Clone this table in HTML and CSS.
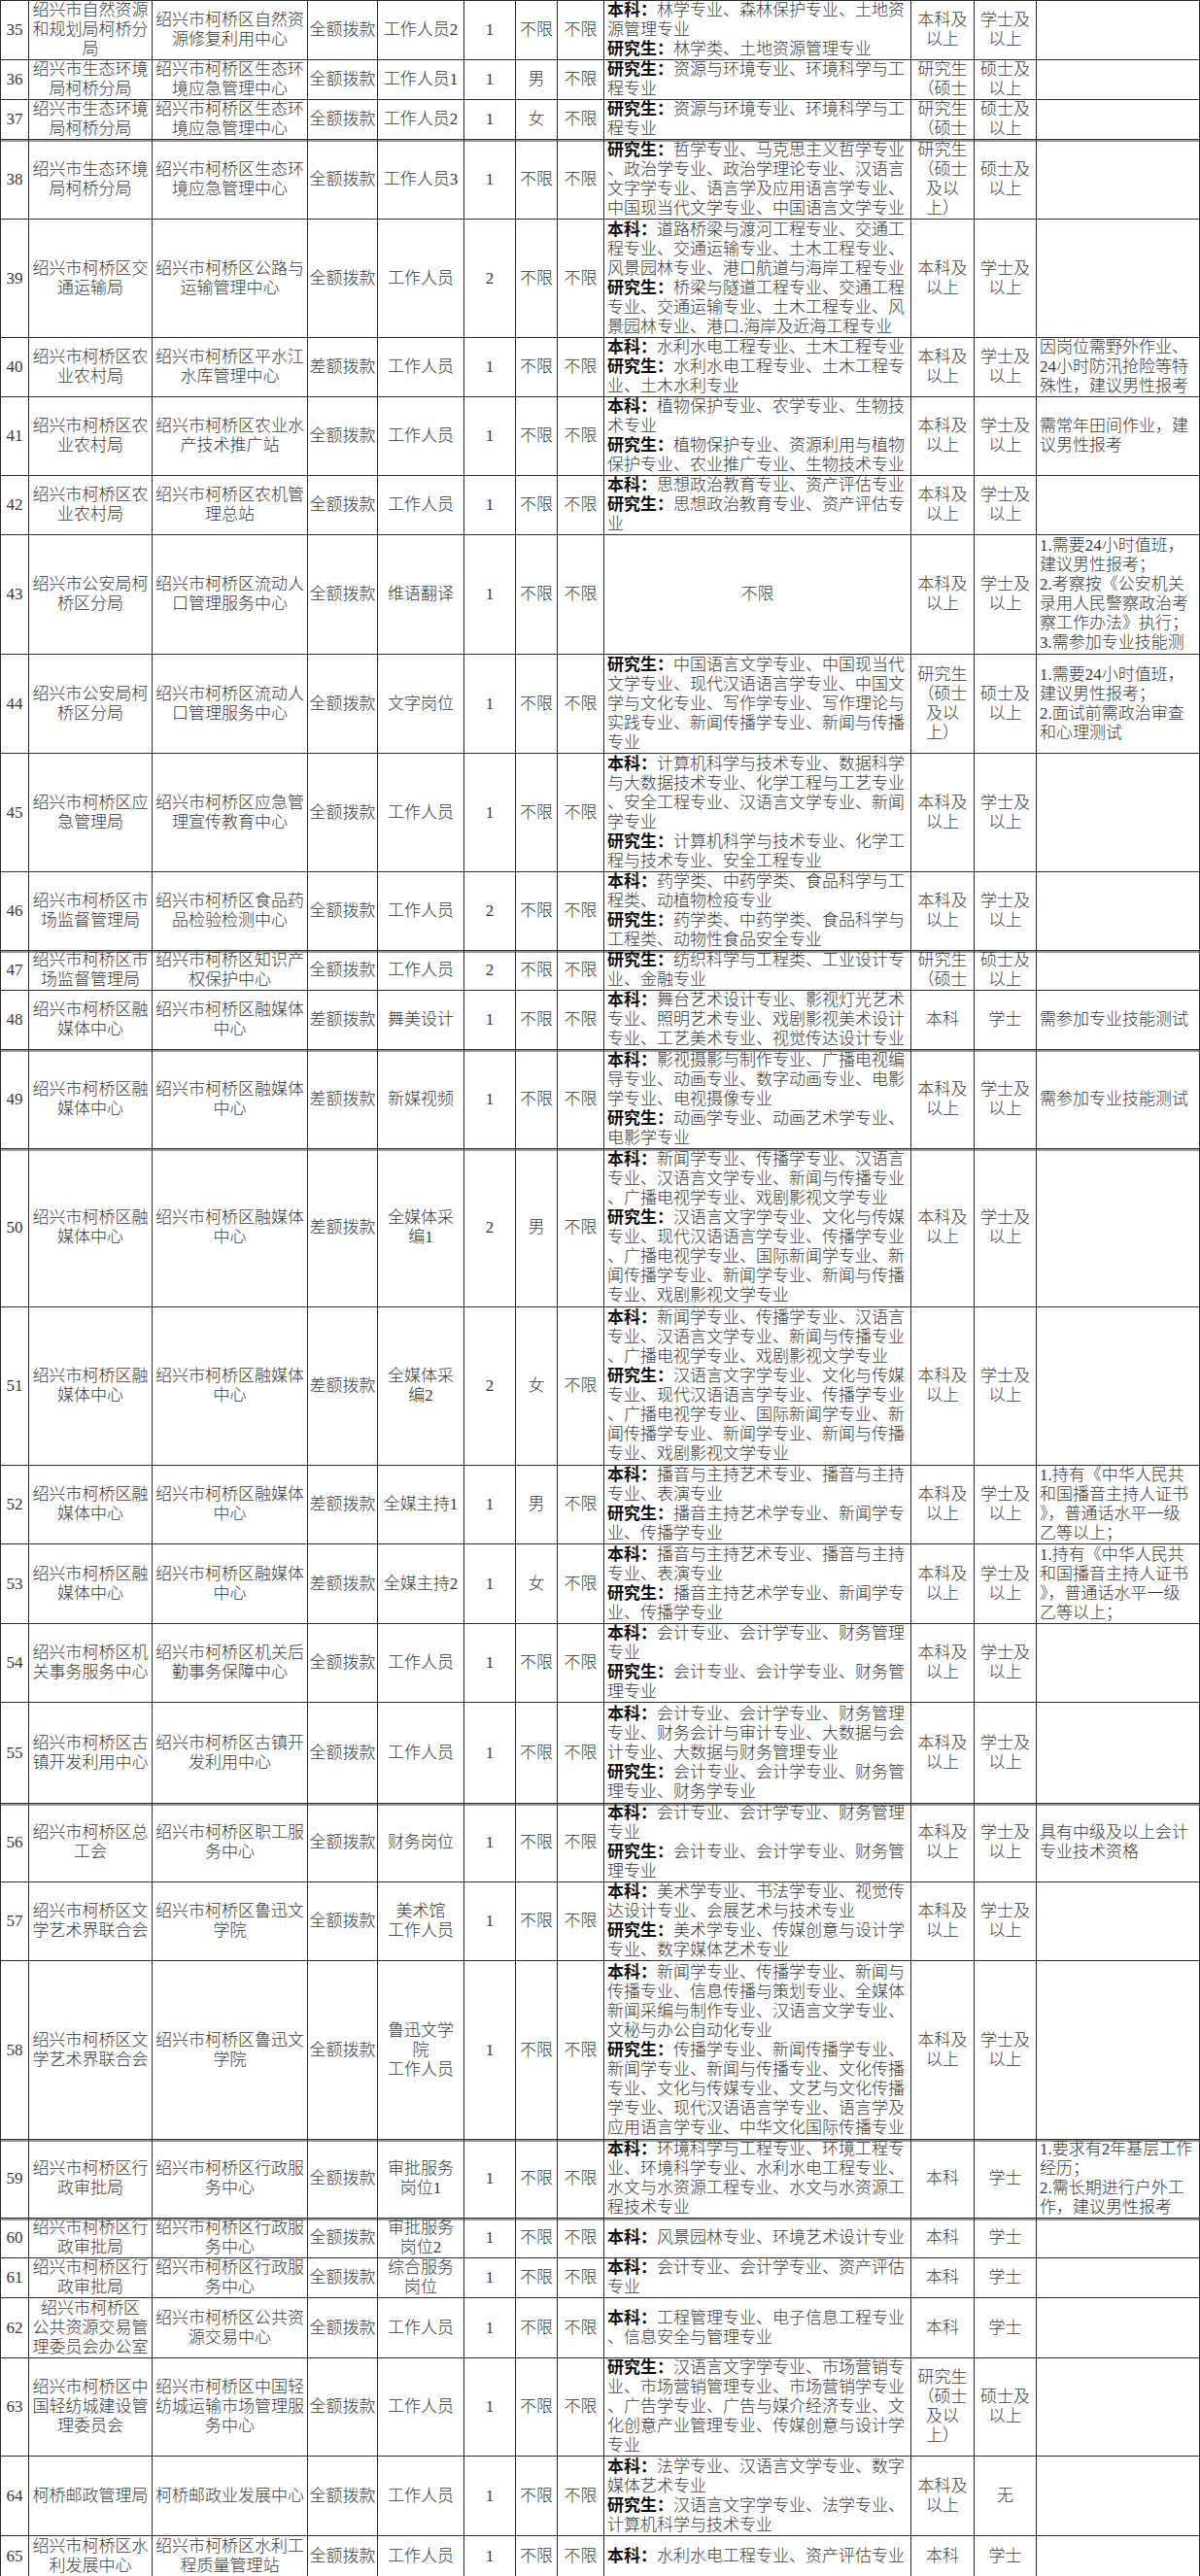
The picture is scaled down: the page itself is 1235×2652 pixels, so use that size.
FILE: index.html
```html
<!DOCTYPE html>
<html lang="zh-CN">
<head>
<meta charset="utf-8">
<title>岗位表</title>
<link rel="stylesheet" href="styles.css">
</head>
<body>
<table class="grid">
<colgroup>
<col class="w-no"><col class="w-dept"><col class="w-unit"><col class="w-fund"><col class="w-post"><col class="w-num"><col class="w-sex"><col class="w-age"><col class="w-major"><col class="w-edu"><col class="w-deg"><col class="w-note">
</colgroup>
<tbody>
<tr class="h61">
<td><div class="c"><p>35</p></div></td>
<td><div class="c"><p>绍兴市自然资源<br>和规划局柯桥分<br>局</p></div></td>
<td><div class="c"><p>绍兴市柯桥区自然资<br>源修复利用中心</p></div></td>
<td><div class="c"><p>全额拨款</p></div></td>
<td><div class="c"><p>工作人员2</p></div></td>
<td><div class="c"><p>1</p></div></td>
<td><div class="c"><p>不限</p></div></td>
<td><div class="c"><p>不限</p></div></td>
<td class="l"><div class="c"><p><b>本科：</b>林学专业、森林保护专业、土地资<br>源管理专业<br><b>研究生：</b>林学类、土地资源管理专业</p></div></td>
<td><div class="c"><p>本科及<br>以上</p></div></td>
<td><div class="c"><p>学士及<br>以上</p></div></td>
<td class="l"><div class="c"><p></p></div></td>
</tr>
<tr class="h41">
<td><div class="c"><p>36</p></div></td>
<td><div class="c"><p>绍兴市生态环境<br>局柯桥分局</p></div></td>
<td><div class="c"><p>绍兴市柯桥区生态环<br>境应急管理中心</p></div></td>
<td><div class="c"><p>全额拨款</p></div></td>
<td><div class="c"><p>工作人员1</p></div></td>
<td><div class="c"><p>1</p></div></td>
<td><div class="c"><p>男</p></div></td>
<td><div class="c"><p>不限</p></div></td>
<td class="l"><div class="c"><p><b>研究生：</b>资源与环境专业、环境科学与工<br>程专业</p></div></td>
<td><div class="c"><p>研究生<br>（硕士</p></div></td>
<td><div class="c"><p>硕士及<br>以上</p></div></td>
<td class="l"><div class="c"><p></p></div></td>
</tr>
<tr class="h41">
<td><div class="c"><p>37</p></div></td>
<td><div class="c"><p>绍兴市生态环境<br>局柯桥分局</p></div></td>
<td><div class="c"><p>绍兴市柯桥区生态环<br>境应急管理中心</p></div></td>
<td><div class="c"><p>全额拨款</p></div></td>
<td><div class="c"><p>工作人员2</p></div></td>
<td><div class="c"><p>1</p></div></td>
<td><div class="c"><p>女</p></div></td>
<td><div class="c"><p>不限</p></div></td>
<td class="l"><div class="c"><p><b>研究生：</b>资源与环境专业、环境科学与工<br>程专业</p></div></td>
<td><div class="c"><p>研究生<br>（硕士</p></div></td>
<td><div class="c"><p>硕士及<br>以上</p></div></td>
<td class="l"><div class="c"><p></p></div></td>
</tr>
<tr class="h82 tk">
<td><div class="c"><p>38</p></div></td>
<td><div class="c"><p>绍兴市生态环境<br>局柯桥分局</p></div></td>
<td><div class="c"><p>绍兴市柯桥区生态环<br>境应急管理中心</p></div></td>
<td><div class="c"><p>全额拨款</p></div></td>
<td><div class="c"><p>工作人员3</p></div></td>
<td><div class="c"><p>1</p></div></td>
<td><div class="c"><p>不限</p></div></td>
<td><div class="c"><p>不限</p></div></td>
<td class="l"><div class="c"><p><b>研究生：</b>哲学专业、马克思主义哲学专业<br>、政治学专业、政治学理论专业、汉语言<br>文字学专业、语言学及应用语言学专业、<br>中国现当代文学专业、中国语言文学专业</p></div></td>
<td><div class="c"><p>研究生<br>（硕士<br>及以<br>上）</p></div></td>
<td><div class="c"><p>硕士及<br>以上</p></div></td>
<td class="l"><div class="c"><p></p></div></td>
</tr>
<tr class="h122">
<td><div class="c"><p>39</p></div></td>
<td><div class="c"><p>绍兴市柯桥区交<br>通运输局</p></div></td>
<td><div class="c"><p>绍兴市柯桥区公路与<br>运输管理中心</p></div></td>
<td><div class="c"><p>全额拨款</p></div></td>
<td><div class="c"><p>工作人员</p></div></td>
<td><div class="c"><p>2</p></div></td>
<td><div class="c"><p>不限</p></div></td>
<td><div class="c"><p>不限</p></div></td>
<td class="l"><div class="c"><p><b>本科：</b>道路桥梁与渡河工程专业、交通工<br>程专业、交通运输专业、土木工程专业、<br>风景园林专业、港口航道与海岸工程专业<br><b>研究生：</b>桥梁与隧道工程专业、交通工程<br>专业、交通运输专业、土木工程专业、风<br>景园林专业、港口.海岸及近海工程专业</p></div></td>
<td><div class="c"><p>本科及<br>以上</p></div></td>
<td><div class="c"><p>学士及<br>以上</p></div></td>
<td class="l"><div class="c"><p></p></div></td>
</tr>
<tr class="h61">
<td><div class="c"><p>40</p></div></td>
<td><div class="c"><p>绍兴市柯桥区农<br>业农村局</p></div></td>
<td><div class="c"><p>绍兴市柯桥区平水江<br>水库管理中心</p></div></td>
<td><div class="c"><p>差额拨款</p></div></td>
<td><div class="c"><p>工作人员</p></div></td>
<td><div class="c"><p>1</p></div></td>
<td><div class="c"><p>不限</p></div></td>
<td><div class="c"><p>不限</p></div></td>
<td class="l"><div class="c"><p><b>本科：</b>水利水电工程专业、土木工程专业<br><b>研究生：</b>水利水电工程专业、土木工程专<br>业、土木水利专业</p></div></td>
<td><div class="c"><p>本科及<br>以上</p></div></td>
<td><div class="c"><p>学士及<br>以上</p></div></td>
<td class="l"><div class="c"><p>因岗位需野外作业、<br>24小时防汛抢险等特<br>殊性，建议男性报考</p></div></td>
</tr>
<tr class="h81">
<td><div class="c"><p>41</p></div></td>
<td><div class="c"><p>绍兴市柯桥区农<br>业农村局</p></div></td>
<td><div class="c"><p>绍兴市柯桥区农业水<br>产技术推广站</p></div></td>
<td><div class="c"><p>全额拨款</p></div></td>
<td><div class="c"><p>工作人员</p></div></td>
<td><div class="c"><p>1</p></div></td>
<td><div class="c"><p>不限</p></div></td>
<td><div class="c"><p>不限</p></div></td>
<td class="l"><div class="c"><p><b>本科：</b>植物保护专业、农学专业、生物技<br>术专业<br><b>研究生：</b>植物保护专业、资源利用与植物<br>保护专业、农业推广专业、生物技术专业</p></div></td>
<td><div class="c"><p>本科及<br>以上</p></div></td>
<td><div class="c"><p>学士及<br>以上</p></div></td>
<td class="l"><div class="c"><p>需常年田间作业，建<br>议男性报考</p></div></td>
</tr>
<tr class="h61">
<td><div class="c"><p>42</p></div></td>
<td><div class="c"><p>绍兴市柯桥区农<br>业农村局</p></div></td>
<td><div class="c"><p>绍兴市柯桥区农机管<br>理总站</p></div></td>
<td><div class="c"><p>全额拨款</p></div></td>
<td><div class="c"><p>工作人员</p></div></td>
<td><div class="c"><p>1</p></div></td>
<td><div class="c"><p>不限</p></div></td>
<td><div class="c"><p>不限</p></div></td>
<td class="l"><div class="c"><p><b>本科：</b>思想政治教育专业、资产评估专业<br><b>研究生：</b>思想政治教育专业、资产评估专<br>业</p></div></td>
<td><div class="c"><p>本科及<br>以上</p></div></td>
<td><div class="c"><p>学士及<br>以上</p></div></td>
<td class="l"><div class="c"><p></p></div></td>
</tr>
<tr class="h123">
<td><div class="c"><p>43</p></div></td>
<td><div class="c"><p>绍兴市公安局柯<br>桥区分局</p></div></td>
<td><div class="c"><p>绍兴市柯桥区流动人<br>口管理服务中心</p></div></td>
<td><div class="c"><p>全额拨款</p></div></td>
<td><div class="c"><p>维语翻译</p></div></td>
<td><div class="c"><p>1</p></div></td>
<td><div class="c"><p>不限</p></div></td>
<td><div class="c"><p>不限</p></div></td>
<td><div class="c"><p>不限</p></div></td>
<td><div class="c"><p>本科及<br>以上</p></div></td>
<td><div class="c"><p>学士及<br>以上</p></div></td>
<td class="l"><div class="c"><p>1.需要24小时值班，<br>建议男性报考；<br>2.考察按《公安机关<br>录用人民警察政治考<br>察工作办法》执行；<br>3.需参加专业技能测</p></div></td>
</tr>
<tr class="h102">
<td><div class="c"><p>44</p></div></td>
<td><div class="c"><p>绍兴市公安局柯<br>桥区分局</p></div></td>
<td><div class="c"><p>绍兴市柯桥区流动人<br>口管理服务中心</p></div></td>
<td><div class="c"><p>全额拨款</p></div></td>
<td><div class="c"><p>文字岗位</p></div></td>
<td><div class="c"><p>1</p></div></td>
<td><div class="c"><p>不限</p></div></td>
<td><div class="c"><p>不限</p></div></td>
<td class="l"><div class="c"><p><b>研究生：</b>中国语言文学专业、中国现当代<br>文学专业、现代汉语语言学专业、中国文<br>学与文化专业、写作学专业、写作理论与<br>实践专业、新闻传播学专业、新闻与传播<br>专业</p></div></td>
<td><div class="c"><p>研究生<br>（硕士<br>及以<br>上）</p></div></td>
<td><div class="c"><p>硕士及<br>以上</p></div></td>
<td class="l"><div class="c"><p>1.需要24小时值班，<br>建议男性报考；<br>2.面试前需政治审查<br>和心理测试</p></div></td>
</tr>
<tr class="h122">
<td><div class="c"><p>45</p></div></td>
<td><div class="c"><p>绍兴市柯桥区应<br>急管理局</p></div></td>
<td><div class="c"><p>绍兴市柯桥区应急管<br>理宣传教育中心</p></div></td>
<td><div class="c"><p>全额拨款</p></div></td>
<td><div class="c"><p>工作人员</p></div></td>
<td><div class="c"><p>1</p></div></td>
<td><div class="c"><p>不限</p></div></td>
<td><div class="c"><p>不限</p></div></td>
<td class="l"><div class="c"><p><b>本科：</b>计算机科学与技术专业、数据科学<br>与大数据技术专业、化学工程与工艺专业<br>、安全工程专业、汉语言文学专业、新闻<br>学专业<br><b>研究生：</b>计算机科学与技术专业、化学工<br>程与技术专业、安全工程专业</p></div></td>
<td><div class="c"><p>本科及<br>以上</p></div></td>
<td><div class="c"><p>学士及<br>以上</p></div></td>
<td class="l"><div class="c"><p></p></div></td>
</tr>
<tr class="h81">
<td><div class="c"><p>46</p></div></td>
<td><div class="c"><p>绍兴市柯桥区市<br>场监督管理局</p></div></td>
<td><div class="c"><p>绍兴市柯桥区食品药<br>品检验检测中心</p></div></td>
<td><div class="c"><p>全额拨款</p></div></td>
<td><div class="c"><p>工作人员</p></div></td>
<td><div class="c"><p>2</p></div></td>
<td><div class="c"><p>不限</p></div></td>
<td><div class="c"><p>不限</p></div></td>
<td class="l"><div class="c"><p><b>本科：</b>药学类、中药学类、食品科学与工<br>程类、动植物检疫专业<br><b>研究生：</b>药学类、中药学类、食品科学与<br>工程类、动物性食品安全专业</p></div></td>
<td><div class="c"><p>本科及<br>以上</p></div></td>
<td><div class="c"><p>学士及<br>以上</p></div></td>
<td class="l"><div class="c"><p></p></div></td>
</tr>
<tr class="h41 tk">
<td><div class="c"><p>47</p></div></td>
<td><div class="c"><p>绍兴市柯桥区市<br>场监督管理局</p></div></td>
<td><div class="c"><p>绍兴市柯桥区知识产<br>权保护中心</p></div></td>
<td><div class="c"><p>全额拨款</p></div></td>
<td><div class="c"><p>工作人员</p></div></td>
<td><div class="c"><p>2</p></div></td>
<td><div class="c"><p>不限</p></div></td>
<td><div class="c"><p>不限</p></div></td>
<td class="l"><div class="c"><p><b>研究生：</b>纺织科学与工程类、工业设计专<br>业、金融专业</p></div></td>
<td><div class="c"><p>研究生<br>（硕士</p></div></td>
<td><div class="c"><p>硕士及<br>以上</p></div></td>
<td class="l"><div class="c"><p></p></div></td>
</tr>
<tr class="h61">
<td><div class="c"><p>48</p></div></td>
<td><div class="c"><p>绍兴市柯桥区融<br>媒体中心</p></div></td>
<td><div class="c"><p>绍兴市柯桥区融媒体<br>中心</p></div></td>
<td><div class="c"><p>差额拨款</p></div></td>
<td><div class="c"><p>舞美设计</p></div></td>
<td><div class="c"><p>1</p></div></td>
<td><div class="c"><p>不限</p></div></td>
<td><div class="c"><p>不限</p></div></td>
<td class="l"><div class="c"><p><b>本科：</b>舞台艺术设计专业、影视灯光艺术<br>专业、照明艺术专业、戏剧影视美术设计<br>专业、工艺美术专业、视觉传达设计专业</p></div></td>
<td><div class="c"><p>本科</p></div></td>
<td><div class="c"><p>学士</p></div></td>
<td class="l"><div class="c"><p>需参加专业技能测试</p></div></td>
</tr>
<tr class="h102 tk">
<td><div class="c"><p>49</p></div></td>
<td><div class="c"><p>绍兴市柯桥区融<br>媒体中心</p></div></td>
<td><div class="c"><p>绍兴市柯桥区融媒体<br>中心</p></div></td>
<td><div class="c"><p>差额拨款</p></div></td>
<td><div class="c"><p>新媒视频</p></div></td>
<td><div class="c"><p>1</p></div></td>
<td><div class="c"><p>不限</p></div></td>
<td><div class="c"><p>不限</p></div></td>
<td class="l"><div class="c"><p><b>本科：</b>影视摄影与制作专业、广播电视编<br>导专业、动画专业、数字动画专业、电影<br>学专业、电视摄像专业<br><b>研究生：</b>动画学专业、动画艺术学专业、<br>电影学专业</p></div></td>
<td><div class="c"><p>本科及<br>以上</p></div></td>
<td><div class="c"><p>学士及<br>以上</p></div></td>
<td class="l"><div class="c"><p>需参加专业技能测试</p></div></td>
</tr>
<tr class="h163 tk">
<td><div class="c"><p>50</p></div></td>
<td><div class="c"><p>绍兴市柯桥区融<br>媒体中心</p></div></td>
<td><div class="c"><p>绍兴市柯桥区融媒体<br>中心</p></div></td>
<td><div class="c"><p>差额拨款</p></div></td>
<td><div class="c"><p>全媒体采<br>编1</p></div></td>
<td><div class="c"><p>2</p></div></td>
<td><div class="c"><p>男</p></div></td>
<td><div class="c"><p>不限</p></div></td>
<td class="l"><div class="c"><p><b>本科：</b>新闻学专业、传播学专业、汉语言<br>专业、汉语言文学专业、新闻与传播专业<br>、广播电视学专业、戏剧影视文学专业<br><b>研究生：</b>汉语言文字学专业、文化与传媒<br>专业、现代汉语语言学专业、传播学专业<br>、广播电视学专业、国际新闻学专业、新<br>闻传播学专业、新闻学专业、新闻与传播<br>专业、戏剧影视文学专业</p></div></td>
<td><div class="c"><p>本科及<br>以上</p></div></td>
<td><div class="c"><p>学士及<br>以上</p></div></td>
<td class="l"><div class="c"><p></p></div></td>
</tr>
<tr class="h163">
<td><div class="c"><p>51</p></div></td>
<td><div class="c"><p>绍兴市柯桥区融<br>媒体中心</p></div></td>
<td><div class="c"><p>绍兴市柯桥区融媒体<br>中心</p></div></td>
<td><div class="c"><p>差额拨款</p></div></td>
<td><div class="c"><p>全媒体采<br>编2</p></div></td>
<td><div class="c"><p>2</p></div></td>
<td><div class="c"><p>女</p></div></td>
<td><div class="c"><p>不限</p></div></td>
<td class="l"><div class="c"><p><b>本科：</b>新闻学专业、传播学专业、汉语言<br>专业、汉语言文学专业、新闻与传播专业<br>、广播电视学专业、戏剧影视文学专业<br><b>研究生：</b>汉语言文字学专业、文化与传媒<br>专业、现代汉语语言学专业、传播学专业<br>、广播电视学专业、国际新闻学专业、新<br>闻传播学专业、新闻学专业、新闻与传播<br>专业、戏剧影视文学专业</p></div></td>
<td><div class="c"><p>本科及<br>以上</p></div></td>
<td><div class="c"><p>学士及<br>以上</p></div></td>
<td class="l"><div class="c"><p></p></div></td>
</tr>
<tr class="h81">
<td><div class="c"><p>52</p></div></td>
<td><div class="c"><p>绍兴市柯桥区融<br>媒体中心</p></div></td>
<td><div class="c"><p>绍兴市柯桥区融媒体<br>中心</p></div></td>
<td><div class="c"><p>差额拨款</p></div></td>
<td><div class="c"><p>全媒主持1</p></div></td>
<td><div class="c"><p>1</p></div></td>
<td><div class="c"><p>男</p></div></td>
<td><div class="c"><p>不限</p></div></td>
<td class="l"><div class="c"><p><b>本科：</b>播音与主持艺术专业、播音与主持<br>专业、表演专业<br><b>研究生：</b>播音主持艺术学专业、新闻学专<br>业、传播学专业</p></div></td>
<td><div class="c"><p>本科及<br>以上</p></div></td>
<td><div class="c"><p>学士及<br>以上</p></div></td>
<td class="l"><div class="c"><p>1.持有《中华人民共<br>和国播音主持人证书<br>》，普通话水平一级<br>乙等以上；</p></div></td>
</tr>
<tr class="h82">
<td><div class="c"><p>53</p></div></td>
<td><div class="c"><p>绍兴市柯桥区融<br>媒体中心</p></div></td>
<td><div class="c"><p>绍兴市柯桥区融媒体<br>中心</p></div></td>
<td><div class="c"><p>差额拨款</p></div></td>
<td><div class="c"><p>全媒主持2</p></div></td>
<td><div class="c"><p>1</p></div></td>
<td><div class="c"><p>女</p></div></td>
<td><div class="c"><p>不限</p></div></td>
<td class="l"><div class="c"><p><b>本科：</b>播音与主持艺术专业、播音与主持<br>专业、表演专业<br><b>研究生：</b>播音主持艺术学专业、新闻学专<br>业、传播学专业</p></div></td>
<td><div class="c"><p>本科及<br>以上</p></div></td>
<td><div class="c"><p>学士及<br>以上</p></div></td>
<td class="l"><div class="c"><p>1.持有《中华人民共<br>和国播音主持人证书<br>》，普通话水平一级<br>乙等以上；</p></div></td>
</tr>
<tr class="h81">
<td><div class="c"><p>54</p></div></td>
<td><div class="c"><p>绍兴市柯桥区机<br>关事务服务中心</p></div></td>
<td><div class="c"><p>绍兴市柯桥区机关后<br>勤事务保障中心</p></div></td>
<td><div class="c"><p>全额拨款</p></div></td>
<td><div class="c"><p>工作人员</p></div></td>
<td><div class="c"><p>1</p></div></td>
<td><div class="c"><p>不限</p></div></td>
<td><div class="c"><p>不限</p></div></td>
<td class="l"><div class="c"><p><b>本科：</b>会计专业、会计学专业、财务管理<br>专业<br><b>研究生：</b>会计专业、会计学专业、财务管<br>理专业</p></div></td>
<td><div class="c"><p>本科及<br>以上</p></div></td>
<td><div class="c"><p>学士及<br>以上</p></div></td>
<td class="l"><div class="c"><p></p></div></td>
</tr>
<tr class="h104">
<td><div class="c"><p>55</p></div></td>
<td><div class="c"><p>绍兴市柯桥区古<br>镇开发利用中心</p></div></td>
<td><div class="c"><p>绍兴市柯桥区古镇开<br>发利用中心</p></div></td>
<td><div class="c"><p>全额拨款</p></div></td>
<td><div class="c"><p>工作人员</p></div></td>
<td><div class="c"><p>1</p></div></td>
<td><div class="c"><p>不限</p></div></td>
<td><div class="c"><p>不限</p></div></td>
<td class="l"><div class="c"><p><b>本科：</b>会计专业、会计学专业、财务管理<br>专业、财务会计与审计专业、大数据与会<br>计专业、大数据与财务管理专业<br><b>研究生：</b>会计专业、会计学专业、财务管<br>理专业、财务学专业</p></div></td>
<td><div class="c"><p>本科及<br>以上</p></div></td>
<td><div class="c"><p>学士及<br>以上</p></div></td>
<td class="l"><div class="c"><p></p></div></td>
</tr>
<tr class="h81 tk">
<td><div class="c"><p>56</p></div></td>
<td><div class="c"><p>绍兴市柯桥区总<br>工会</p></div></td>
<td><div class="c"><p>绍兴市柯桥区职工服<br>务中心</p></div></td>
<td><div class="c"><p>全额拨款</p></div></td>
<td><div class="c"><p>财务岗位</p></div></td>
<td><div class="c"><p>1</p></div></td>
<td><div class="c"><p>不限</p></div></td>
<td><div class="c"><p>不限</p></div></td>
<td class="l"><div class="c"><p><b>本科：</b>会计专业、会计学专业、财务管理<br>专业<br><b>研究生：</b>会计专业、会计学专业、财务管<br>理专业</p></div></td>
<td><div class="c"><p>本科及<br>以上</p></div></td>
<td><div class="c"><p>学士及<br>以上</p></div></td>
<td class="l"><div class="c"><p>具有中级及以上会计<br>专业技术资格</p></div></td>
</tr>
<tr class="h81">
<td><div class="c"><p>57</p></div></td>
<td><div class="c"><p>绍兴市柯桥区文<br>学艺术界联合会</p></div></td>
<td><div class="c"><p>绍兴市柯桥区鲁迅文<br>学院</p></div></td>
<td><div class="c"><p>全额拨款</p></div></td>
<td><div class="c"><p>美术馆<br>工作人员</p></div></td>
<td><div class="c"><p>1</p></div></td>
<td><div class="c"><p>不限</p></div></td>
<td><div class="c"><p>不限</p></div></td>
<td class="l"><div class="c"><p><b>本科：</b>美术学专业、书法学专业、视觉传<br>达设计专业、会展艺术与技术专业<br><b>研究生：</b>美术学专业、传媒创意与设计学<br>专业、数字媒体艺术专业</p></div></td>
<td><div class="c"><p>本科及<br>以上</p></div></td>
<td><div class="c"><p>学士及<br>以上</p></div></td>
<td class="l"><div class="c"><p></p></div></td>
</tr>
<tr class="h184">
<td><div class="c"><p>58</p></div></td>
<td><div class="c"><p>绍兴市柯桥区文<br>学艺术界联合会</p></div></td>
<td><div class="c"><p>绍兴市柯桥区鲁迅文<br>学院</p></div></td>
<td><div class="c"><p>全额拨款</p></div></td>
<td><div class="c"><p>鲁迅文学<br>院<br>工作人员</p></div></td>
<td><div class="c"><p>1</p></div></td>
<td><div class="c"><p>不限</p></div></td>
<td><div class="c"><p>不限</p></div></td>
<td class="l"><div class="c"><p><b>本科：</b>新闻学专业、传播学专业、新闻与<br>传播专业、信息传播与策划专业、全媒体<br>新闻采编与制作专业、汉语言文学专业、<br>文秘与办公自动化专业<br><b>研究生：</b>传播学专业、新闻传播学专业、<br>新闻学专业、新闻与传播专业、文化传播<br>专业、文化与传媒专业、文艺与文化传播<br>学专业、现代汉语语言学专业、语言学及<br>应用语言学专业、中华文化国际传播专业</p></div></td>
<td><div class="c"><p>本科及<br>以上</p></div></td>
<td><div class="c"><p>学士及<br>以上</p></div></td>
<td class="l"><div class="c"><p></p></div></td>
</tr>
<tr class="h81 tk">
<td><div class="c"><p>59</p></div></td>
<td><div class="c"><p>绍兴市柯桥区行<br>政审批局</p></div></td>
<td><div class="c"><p>绍兴市柯桥区行政服<br>务中心</p></div></td>
<td><div class="c"><p>全额拨款</p></div></td>
<td><div class="c"><p>审批服务<br>岗位1</p></div></td>
<td><div class="c"><p>1</p></div></td>
<td><div class="c"><p>不限</p></div></td>
<td><div class="c"><p>不限</p></div></td>
<td class="l"><div class="c"><p><b>本科：</b>环境科学与工程专业、环境工程专<br>业、环境科学专业、水利水电工程专业、<br>水文与水资源工程专业、水文与水资源工<br>程技术专业</p></div></td>
<td><div class="c"><p>本科</p></div></td>
<td><div class="c"><p>学士</p></div></td>
<td class="l"><div class="c"><p>1.要求有2年基层工作<br>经历；<br>2.需长期进行户外工<br>作，建议男性报考</p></div></td>
</tr>
<tr class="h41 tk">
<td><div class="c"><p>60</p></div></td>
<td><div class="c"><p>绍兴市柯桥区行<br>政审批局</p></div></td>
<td><div class="c"><p>绍兴市柯桥区行政服<br>务中心</p></div></td>
<td><div class="c"><p>全额拨款</p></div></td>
<td><div class="c"><p>审批服务<br>岗位2</p></div></td>
<td><div class="c"><p>1</p></div></td>
<td><div class="c"><p>不限</p></div></td>
<td><div class="c"><p>不限</p></div></td>
<td class="l"><div class="c"><p><b>本科：</b>风景园林专业、环境艺术设计专业</p></div></td>
<td><div class="c"><p>本科</p></div></td>
<td><div class="c"><p>学士</p></div></td>
<td class="l"><div class="c"><p></p></div></td>
</tr>
<tr class="h41">
<td><div class="c"><p>61</p></div></td>
<td><div class="c"><p>绍兴市柯桥区行<br>政审批局</p></div></td>
<td><div class="c"><p>绍兴市柯桥区行政服<br>务中心</p></div></td>
<td><div class="c"><p>全额拨款</p></div></td>
<td><div class="c"><p>综合服务<br>岗位</p></div></td>
<td><div class="c"><p>1</p></div></td>
<td><div class="c"><p>不限</p></div></td>
<td><div class="c"><p>不限</p></div></td>
<td class="l"><div class="c"><p><b>本科：</b>会计专业、会计学专业、资产评估<br>专业</p></div></td>
<td><div class="c"><p>本科</p></div></td>
<td><div class="c"><p>学士</p></div></td>
<td class="l"><div class="c"><p></p></div></td>
</tr>
<tr class="h62">
<td><div class="c"><p>62</p></div></td>
<td><div class="c"><p>绍兴市柯桥区<br>公共资源交易管<br>理委员会办公室</p></div></td>
<td><div class="c"><p>绍兴市柯桥区公共资<br>源交易中心</p></div></td>
<td><div class="c"><p>全额拨款</p></div></td>
<td><div class="c"><p>工作人员</p></div></td>
<td><div class="c"><p>1</p></div></td>
<td><div class="c"><p>不限</p></div></td>
<td><div class="c"><p>不限</p></div></td>
<td class="l"><div class="c"><p><b>本科：</b>工程管理专业、电子信息工程专业<br>、信息安全与管理专业</p></div></td>
<td><div class="c"><p>本科</p></div></td>
<td><div class="c"><p>学士</p></div></td>
<td class="l"><div class="c"><p></p></div></td>
</tr>
<tr class="h101">
<td><div class="c"><p>63</p></div></td>
<td><div class="c"><p>绍兴市柯桥区中<br>国轻纺城建设管<br>理委员会</p></div></td>
<td><div class="c"><p>绍兴市柯桥区中国轻<br>纺城运输市场管理服<br>务中心</p></div></td>
<td><div class="c"><p>全额拨款</p></div></td>
<td><div class="c"><p>工作人员</p></div></td>
<td><div class="c"><p>1</p></div></td>
<td><div class="c"><p>不限</p></div></td>
<td><div class="c"><p>不限</p></div></td>
<td class="l"><div class="c"><p><b>研究生：</b>汉语言文字学专业、市场营销专<br>业、市场营销管理专业、市场营销学专业<br>、广告学专业、广告与媒介经济专业、文<br>化创意产业管理专业、传媒创意与设计学<br>专业</p></div></td>
<td><div class="c"><p>研究生<br>（硕士<br>及以<br>上）</p></div></td>
<td><div class="c"><p>硕士及<br>以上</p></div></td>
<td class="l"><div class="c"><p></p></div></td>
</tr>
<tr class="h82">
<td><div class="c"><p>64</p></div></td>
<td><div class="c"><p>柯桥邮政管理局</p></div></td>
<td><div class="c"><p>柯桥邮政业发展中心</p></div></td>
<td><div class="c"><p>全额拨款</p></div></td>
<td><div class="c"><p>工作人员</p></div></td>
<td><div class="c"><p>1</p></div></td>
<td><div class="c"><p>不限</p></div></td>
<td><div class="c"><p>不限</p></div></td>
<td class="l"><div class="c"><p><b>本科：</b>法学专业、汉语言文学专业、数字<br>媒体艺术专业<br><b>研究生：</b>汉语言文字学专业、法学专业、<br>计算机科学与技术专业</p></div></td>
<td><div class="c"><p>本科及<br>以上</p></div></td>
<td><div class="c"><p>无</p></div></td>
<td class="l"><div class="c"><p></p></div></td>
</tr>
<tr class="h42">
<td><div class="c"><p>65</p></div></td>
<td><div class="c"><p>绍兴市柯桥区水<br>利发展中心</p></div></td>
<td><div class="c"><p>绍兴市柯桥区水利工<br>程质量管理站</p></div></td>
<td><div class="c"><p>全额拨款</p></div></td>
<td><div class="c"><p>工作人员</p></div></td>
<td><div class="c"><p>1</p></div></td>
<td><div class="c"><p>不限</p></div></td>
<td><div class="c"><p>不限</p></div></td>
<td class="l"><div class="c"><p><b>本科：</b>水利水电工程专业、资产评估专业</p></div></td>
<td><div class="c"><p>本科</p></div></td>
<td><div class="c"><p>学士</p></div></td>
<td class="l"><div class="c"><p></p></div></td>
</tr>
</tbody>
</table>
</body>
</html>
```
FILE: styles.css
```css
html, body {
  margin: 0;
  padding: 0;
  background: #ffffff;
}

body {
  font-family: "Liberation Serif", "Noto Sans CJK SC", serif;
  font-size: 17px;
  font-weight: 300;
  color: #3a3a3a;
}

.grid {
  border-collapse: collapse;
  table-layout: fixed;
  width: 1234px;
}

.w-no { width: 29px; }
.w-dept { width: 127px; }
.w-unit { width: 160px; }
.w-fund { width: 72px; }
.w-post { width: 89px; }
.w-num { width: 53px; }
.w-sex { width: 43px; }
.w-age { width: 48px; }
.w-major { width: 316px; }
.w-edu { width: 65px; }
.w-deg { width: 64px; }
.w-note { width: 168px; }

.grid td {
  border: 1px solid #2e2e2e;
  padding: 0;
  vertical-align: top;
}

.grid tr.tk > td {
  box-shadow: inset 0 2px 0 #9a9a9a;
}

.c {
  display: flex;
  flex-direction: column;
  justify-content: safe center;
  overflow: hidden;
}

.c p {
  margin: 0;
  line-height: 20px;
  white-space: nowrap;
  text-align: center;
}

.l .c p {
  text-align: left;
  padding-left: 3px;
}

.c b {
  font-weight: 700;
  color: #111;
}

.h41 .c { height: 40px; }
.h42 .c { height: 41px; }
.h61 .c { height: 60px; }
.h62 .c { height: 61px; }
.h81 .c { height: 80px; }
.h82 .c { height: 81px; }
.h101 .c { height: 100px; }
.h102 .c { height: 101px; }
.h104 .c { height: 103px; }
.h122 .c { height: 121px; }
.h123 .c { height: 122px; }
.h163 .c { height: 162px; }
.h184 .c { height: 183px; }
```
